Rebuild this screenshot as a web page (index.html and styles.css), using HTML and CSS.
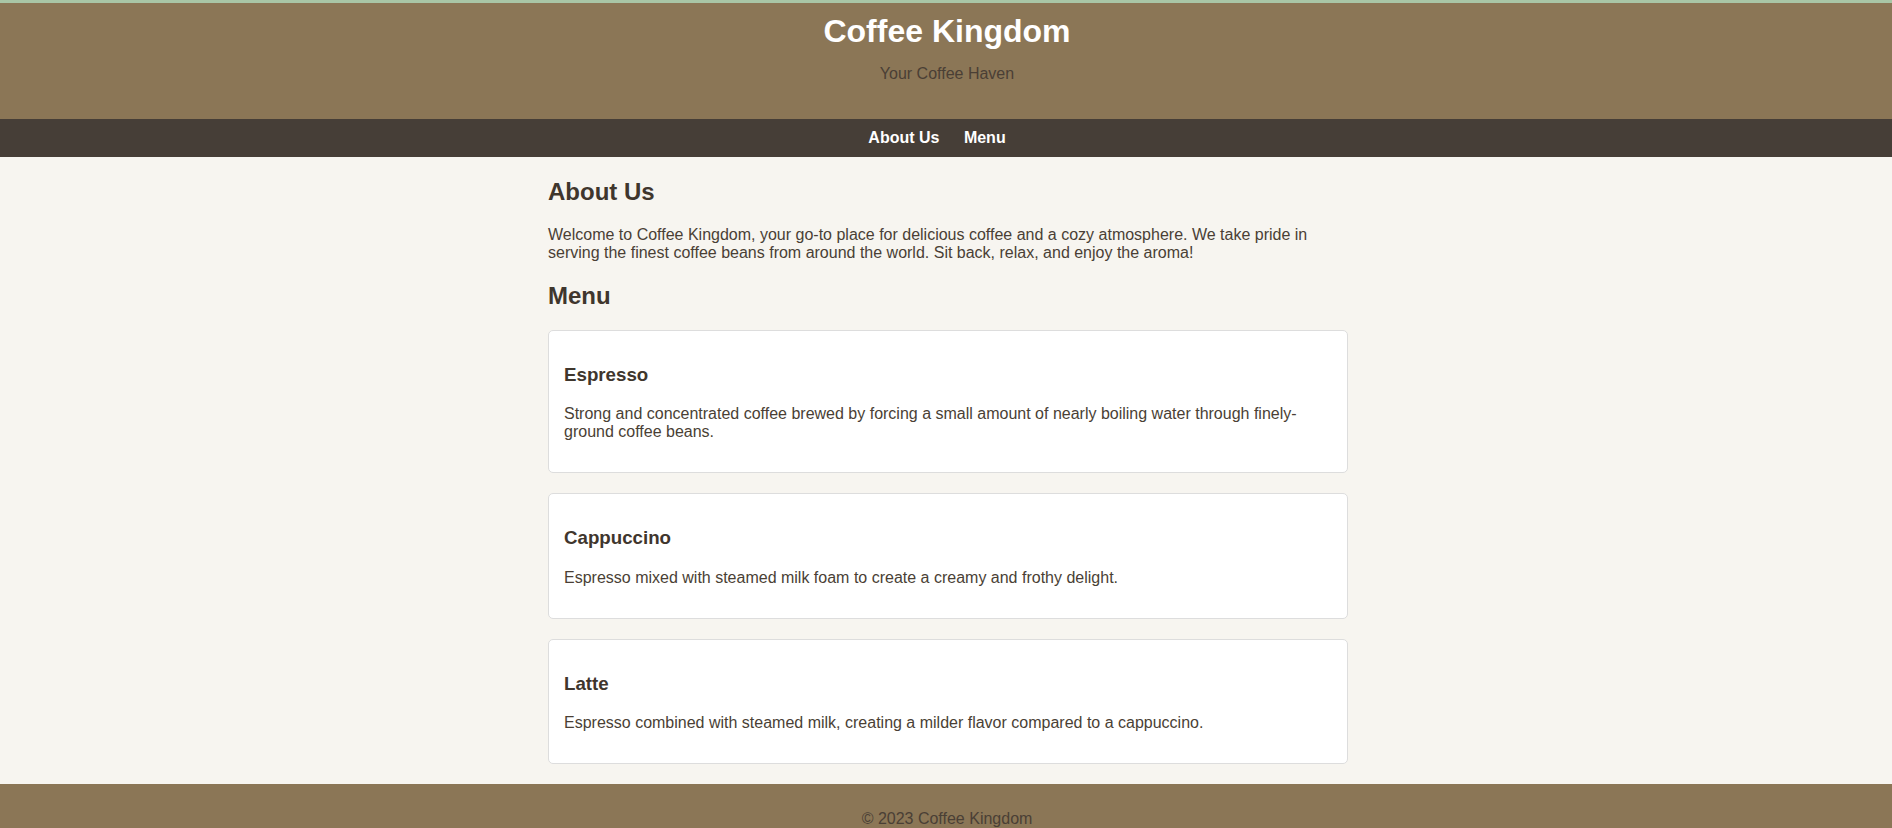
FILE: index.html
```html
<!DOCTYPE html>
<html lang="en">
<head>
<meta charset="utf-8">
<title>Coffee Kingdom</title>
<link rel="stylesheet" href="styles.css">
</head>
<body>
<header class="site-header">
  <h1 class="site-title">Coffee Kingdom</h1>
  <p class="site-tagline">Your Coffee Haven</p>
</header>
<nav class="site-nav">
  <ul class="nav-list">
    <li class="nav-item"><a class="nav-link" href="#about">About Us</a></li>
    <li class="nav-item"><a class="nav-link" href="#menu">Menu</a></li>
  </ul>
</nav>
<main class="content">
  <section id="about">
    <h2 class="section-title">About Us</h2>
    <p class="text">Welcome to Coffee Kingdom, your go-to place for delicious coffee and a cozy atmosphere. We take pride in serving the finest coffee beans from around the world. Sit back, relax, and enjoy the aroma!</p>
  </section>
  <section id="menu">
    <h2 class="section-title">Menu</h2>
    <div class="menu-item">
      <h3 class="item-title">Espresso</h3>
      <p class="text">Strong and concentrated coffee brewed by forcing a small amount of nearly boiling water through finely-ground coffee beans.</p>
    </div>
    <div class="menu-item">
      <h3 class="item-title">Cappuccino</h3>
      <p class="text">Espresso mixed with steamed milk foam to create a creamy and frothy delight.</p>
    </div>
    <div class="menu-item">
      <h3 class="item-title">Latte</h3>
      <p class="text">Espresso combined with steamed milk, creating a milder flavor compared to a cappuccino.</p>
    </div>
  </section>
</main>
<footer class="site-footer">
  <p class="footer-text">&copy; 2023 Coffee Kingdom</p>
</footer>
</body>
</html>
```
FILE: styles.css
```css
html, body {
  margin: 0;
  padding: 0;
}
body {
  font-family: "Liberation Sans", Arial, sans-serif;
  font-size: 16px;
  background: #f7f5f0;
  color: #4a3f35;
}
.site-header {
  background: #8b7656;
  border-top: 3px solid #a9c6a6;
  text-align: center;
  padding: 10px 0 20px 2px;
}
.site-title {
  margin: 0;
  font-size: 32px;
  color: #ffffff;
}
.site-tagline {
  margin: 15px 0 16px;
  color: #4a3f35;
}
.site-nav {
  background: #463e37;
  padding: 10px 0 10px 2px;
  text-align: center;
}
.nav-list {
  list-style: none;
  margin: 0;
  padding: 0;
}
.nav-item {
  display: inline;
  margin-right: 20px;
}
.nav-link {
  color: #ffffff;
  font-weight: bold;
  text-decoration: none;
}
.content {
  width: 800px;
  margin: 21px auto 20px calc(50% - 398px);
}
.section-title {
  font-size: 24px;
  margin: 20px 0;
  color: #3f362d;
}
.text {
  margin: 16px 0;
}
.menu-item {
  background: #ffffff;
  border: 1px solid #dddddd;
  border-radius: 5px;
  padding: 15px;
  margin-bottom: 20px;
}
.item-title {
  font-size: 18.72px;
  margin: 17.72px 0 19.72px;
  color: #3f362d;
}
.site-footer {
  background: #8b7656;
  text-align: center;
  padding: 10px 0 10px 2px;
}
.footer-text {
  margin: 16px 0;
  color: #4a3f35;
}
```
